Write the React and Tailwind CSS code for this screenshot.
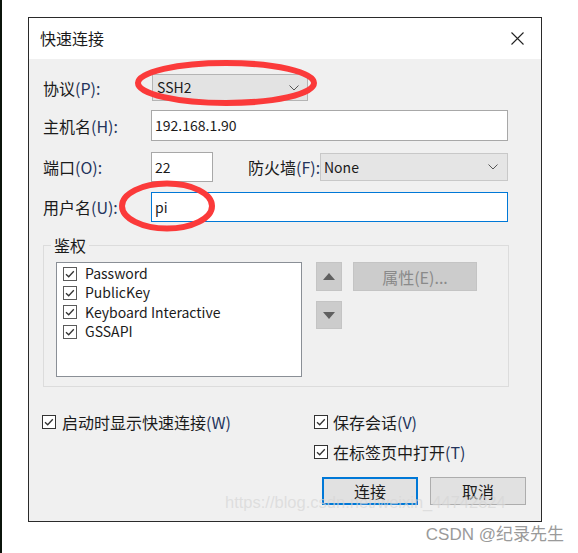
import React from 'react';

const font = "font-['Noto_Sans_CJK_SC','Noto_Sans',sans-serif]";

const Check = ({ dim }) => (
  <svg width="14" height="14" viewBox="0 0 14 14" className="shrink-0">
    <rect x="0.5" y="0.5" width="13" height="13" fill="#fff" stroke={dim ? '#5a5a5a' : '#333'} />
    <polyline points="3,7.2 5.7,9.8 10.8,4.2" fill="none" stroke="#333" strokeWidth="1.3" />
  </svg>
);

const Chevron = () => (
  <svg width="10" height="6" viewBox="0 0 10 6">
    <polyline points="0.5,0.5 5,5 9.5,0.5" fill="none" stroke="#555" strokeWidth="1" />
  </svg>
);

const Key = ({ children }) => <span className="text-[#24345c]">{children}</span>;

const App = () => {
  const methods = ['Password', 'PublicKey', 'Keyboard Interactive', 'GSSAPI'];

  return (
    <div className={`relative w-[578px] h-[553px] bg-white flex ${font} text-[16px] text-[#1b1b1b] overflow-hidden`}>
      {/* left edge of the desktop behind */}
      <div className="w-[2px] h-full bg-[#0b140b]" />

      <div className="flex flex-col">
        <div className="ml-[26px] mt-[17px] w-[514px] h-[505px] border border-[#2a2a2a] flex flex-col">
          {/* title bar */}
          <div className="h-[41px] bg-white flex items-center justify-between pl-[11px] pr-[17px] shrink-0">
            <span className="text-[16px] leading-none -mt-[2px]">快速连接</span>
            <svg width="13" height="13" viewBox="0 0 13 13">
              <path d="M0.5 0.5 L12.5 12.5 M12.5 0.5 L0.5 12.5" stroke="#222" strokeWidth="1.1" />
            </svg>
          </div>

          {/* body */}
          <div className="flex-1 bg-[#f0f0f0] pl-[14px] pt-[15px] flex flex-col">
            <div className="flex items-center h-[27px]">
              <span className="w-[109px]">协议<Key>(P):</Key></span>
              <div className="w-[156px] h-[27px] bg-[#e3e3e3] border border-[#b4b4b4] flex items-center justify-between pl-[4px] pr-[8px]">
                <span className="text-[14px]">SSH2</span>
                <Chevron />
              </div>
            </div>

            <div className="flex items-center h-[31px] mt-[9px]">
              <span className="w-[108px]">主机名<Key>(H):</Key></span>
              <div className="w-[357px] h-[31px] bg-white border border-[#a8a8a8] flex items-center pl-[3px] text-[14px]">
                192.168.1.90
              </div>
            </div>

            <div className="flex items-center h-[30px] mt-[11px]">
              <span className="w-[108px]">端口<Key>(O):</Key></span>
              <div className="w-[62px] h-[30px] bg-white border border-[#a8a8a8] flex items-center pl-[3px] text-[14px]">
                22
              </div>
              <span className="ml-[35px] w-[72px] whitespace-nowrap">防火墙<Key>(F):</Key></span>
              <div className="w-[188px] h-[28px] bg-[#e5e5e5] border border-[#c8c8c8] flex items-center justify-between pl-[3px] pr-[9px]">
                <span className="text-[14px]">None</span>
                <Chevron />
              </div>
            </div>

            <div className="flex items-center h-[30px] mt-[10px]">
              <span className="w-[108px]">用户名<Key>(U):</Key></span>
              <div className="w-[357px] h-[30px] bg-white border border-[#0078d7] flex items-center pl-[3px] text-[14px]">
                pi
              </div>
            </div>

            {/* 鉴权 group */}
            <div className="relative mt-[23px] w-[466px] h-[142px] border border-[#dcdcdc] pt-[16px] pl-[12px] flex">
              <span className="absolute -top-[11px] left-[7px] px-[3px] bg-[#f0f0f0] leading-[20px]">鉴权</span>
              <div className="w-[246px] h-[115px] bg-white border border-[#8a8f96] pt-[1px] pl-[6px] flex flex-col">
                {methods.map(m => (
                  <div key={m} className="flex items-center gap-[8px] h-[19.3px] text-[14px]">
                    <Check dim />
                    <span>{m}</span>
                  </div>
                ))}
              </div>
              <div className="ml-[14px] flex flex-col gap-[10px]">
                <div className="w-[26px] h-[29px] bg-[#cccccc] border border-[#c4c4c4] flex items-center justify-center">
                  <svg width="12" height="7" viewBox="0 0 12 7"><polygon points="6,0 12,7 0,7" fill="#5f5f5f" /></svg>
                </div>
                <div className="w-[26px] h-[28px] bg-[#cccccc] border border-[#c4c4c4] flex items-center justify-center">
                  <svg width="12" height="7" viewBox="0 0 12 7"><polygon points="0,0 12,0 6,7" fill="#5f5f5f" /></svg>
                </div>
              </div>
              <div className="ml-[11px] w-[124px] h-[29px] bg-[#cccccc] border border-[#c4c4c4] flex items-center justify-center text-[#8a8a8a]">
                属性(E)...
              </div>
            </div>

            {/* options */}
            <div className="grid grid-cols-[272px_1fr] mt-[25px] -ml-[1px]">
              <div className="flex items-center gap-[6px] h-[20px]">
                <Check />
                <span>启动时显示快速连接<Key>(W)</Key></span>
              </div>
              <div className="flex items-center gap-[5px] h-[20px]">
                <Check />
                <span>保存会话<Key>(V)</Key></span>
              </div>
              <div />
              <div className="flex items-center gap-[5px] h-[20px] mt-[10px]">
                <Check />
                <span>在标签页中打开<Key>(T)</Key></span>
              </div>
            </div>

            <div className="flex justify-end gap-[12px] mt-[15px] pr-[15px]">
              <button className="w-[96px] h-[28px] bg-[#e1e1e1] border-2 border-[#0078d7] flex items-center justify-center">
                连接
              </button>
              <button className="w-[96px] h-[28px] bg-[#e1e1e1] border border-[#adadad] flex items-center justify-center">
                取消
              </button>
            </div>
          </div>
        </div>

        <div className="self-end mt-[3px] mr-[-22px] font-['Liberation_Sans','Noto_Sans_CJK_SC',sans-serif] text-[17px] leading-[20px] text-[#9a9a9a] whitespace-nowrap">
          CSDN @纪录先生
        </div>
      </div>

      {/* blog watermark */}
      <span className="absolute left-[225px] top-[491px] font-['Liberation_Sans',sans-serif] text-[16.5px] leading-[22px] text-[#d6d6d6]/70 whitespace-nowrap pointer-events-none">
        https://blog.csdn.net/weixin_44742824
      </span>

      {/* red annotation ellipses */}
      <svg className="absolute left-[134px] top-[58px] pointer-events-none" width="184" height="50" viewBox="0 0 184 50">
        <ellipse cx="92" cy="25" rx="88" ry="20" fill="none" stroke="#fb3a3a" strokeWidth="6" />
      </svg>
      <svg className="absolute left-[118px] top-[179px] pointer-events-none" width="98" height="54" viewBox="0 0 98 54">
        <ellipse cx="49" cy="27" rx="45" ry="22.5" fill="none" stroke="#fb3a3a" strokeWidth="6" />
      </svg>
    </div>
  );
};

export default App;
